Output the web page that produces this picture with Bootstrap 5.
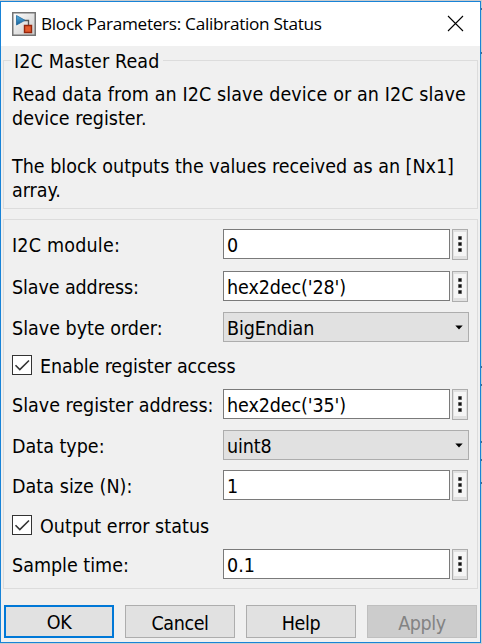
<!DOCTYPE html>
<html lang="en">
<head>
<meta charset="utf-8">
<title>Block Parameters: Calibration Status</title>
<link href="https://cdn.jsdelivr.net/npm/bootstrap@5.3.0/dist/css/bootstrap.min.css" rel="stylesheet">
<style>
body{width:482px;height:644px;background:#c9ccce;font-family:"DejaVu Sans Condensed","DejaVu Sans",sans-serif;font-stretch:condensed;font-size:19.5px;line-height:33px;color:#000;overflow:hidden;padding-top:1px;position:relative}
.dialog{width:481px;height:642px;background:#f0f0f0;border:1px solid #1883d7}
.titlebar{height:44px;padding:0 16px 0 11px}
.title-label{font:17.2px/44px "Open Sans",sans-serif;letter-spacing:-.3px;margin-left:5px}
.close-mark{margin-top:-2px}
.group{border:1px solid #dcdcdc;margin:0 2px}
.info{height:149px;margin-top:14px;padding:0 8px}
.legend-label{background:#f0f0f0;width:max-content;height:24px;line-height:24px;padding:1px 4px 0 3px;margin:-12px 0 0 -1px;letter-spacing:.12px}
.desc{line-height:24px;margin:10px 0 0;white-space:nowrap}
.params{display:grid;grid-template-rows:42px 41px 38px 39px 41px 40px 40px 39px 31px;height:370px;margin-top:10px;padding:9px 7px 0 8px}
.param{display:grid;grid-template-columns:211px 227px 16px;column-gap:0;white-space:nowrap}
.param>.more{margin-left:2px}
.field{height:30px;border:1px solid #7a7a7a;background:#fff;padding:0 3px;line-height:31px;overflow:hidden}
.pick{grid-column:2/4;width:246px;border-color:#adadad;background:#e1e1e1;padding-right:5px}
.pick>span{padding-top:2px}
.more{width:16px;height:31px;border:1px solid #adadad;background:#e1e1e1;padding:2px 1px 3px}
.more svg{display:block}
.check{height:20px;margin-top:5px;line-height:23px;white-space:nowrap}
.box{width:20px;height:20px;border:1px solid #333;background:#fff;margin-right:8px}
.box svg{display:block}
.cmd{width:110px;height:33px;border:1px solid #adadad;background:#e1e1e1;border-radius:0;padding:2px 0 0;font-size:19.5px;line-height:31px;color:#000;letter-spacing:-.4px}
.cmd.ok{border:2px solid #0078d7;line-height:30px;padding-top:1px}
.cmd.off{background:#ccc;border-color:#bfbfbf;color:#838383}
.actions{margin:16px 2px 0 3px;width:473px}
.t1{letter-spacing:.11px}.t2{letter-spacing:.2px}.t3{letter-spacing:-.1px}.t4{letter-spacing:.05px}
.behind{position:absolute;right:0;top:0}
</style>
<script src="https://cdn.jsdelivr.net/npm/bootstrap@5.3.0/dist/js/bootstrap.bundle.min.js"></script>
</head>
<body>
<svg class="d-none" aria-hidden="true">
<symbol id="dots" viewBox="0 0 12 24"><path fill="#f5f5f5" d="M0 0h12v24H0z"/><path fill="#999" d="M4 4h4v4H4zm0 6h4v4H4zm0 6h4v4H4z"/><path fill="#111" d="M4.6 4.6h2.8v2.8H4.600zm0 6h2.8v2.8H4.600zm0 6h2.8v2.8H4.600z"/></symbol>
<symbol id="tick" viewBox="0 0 18 18"><path d="M2.500 9.200 6.800 13.500 16 4.500" fill="none" stroke="#333" stroke-width="1.600"/></symbol>
<symbol id="arrow" viewBox="0 0 8 5"><path d="M.3.5h7.400L4 4.500z"/></symbol>
</svg>
<main class="dialog">
<header class="titlebar bg-white d-flex align-items-center">
<svg width="24" height="24" viewBox="0 0 24 24">
<defs><linearGradient id="tile" x2="1" y2="1"><stop stop-color="#fff"/><stop offset="1" stop-color="#c8c8c8"/></linearGradient>
<linearGradient id="tri" x2="0" y2="1"><stop stop-color="#5bb5e5"/><stop offset="1" stop-color="#145d96"/></linearGradient></defs>
<path d="M.75.75h22.500v22.500H.75z" fill="url(#tile)" stroke="#747474" stroke-width="1.500"/>
<path d="M12 8.500h4.500V13" fill="none" stroke="#555" stroke-width="1.300"/>
<path d="M4.500 3.500v9.500L13 8.300z" fill="url(#tri)" stroke="#25699c" stroke-width=".8"/>
<path d="M12.500 13.500h7v7h-7z" fill="#e45b2d" stroke="#96260d" stroke-width="1.400"/>
</svg>
<span class="title-label">Block Parameters: Calibration Status</span>
<svg class="close-mark ms-auto" width="17" height="17" viewBox="0 0 17 17"><path d="M1 1 16 16M16 1 1 16" stroke="#000" stroke-width="1.100"/></svg>
</header>
<section class="group info">
<div class="legend-label">I2C Master Read</div>
<p class="desc"><span class="t1">Read data from an I2C slave device or an I2C slave</span><br>device register.<br><br>The block outputs the values received as an [Nx1]<br>array.</p>
</section>
<section class="group params">
<div class="param"><span class="t2">I2C module:</span><div class="field">0</div><div class="more"><svg width="12" height="24"><use href="#dots"/></svg></div></div>
<div class="param"><span class="t3">Slave address:</span><div class="field t3">hex2dec('28')</div><div class="more"><svg width="12" height="24"><use href="#dots"/></svg></div></div>
<div class="param"><span>Slave byte order:</span><div class="field pick d-flex justify-content-between align-items-center"><span class="t3">BigEndian</span><svg width="8" height="5"><use href="#arrow"/></svg></div></div>
<div class="check d-flex"><span class="box"><svg width="18" height="18"><use href="#tick"/></svg></span><span class="t3">Enable register access</span></div>
<div class="param"><span>Slave register address:</span><div class="field t3">hex2dec('35')</div><div class="more"><svg width="12" height="24"><use href="#dots"/></svg></div></div>
<div class="param"><span>Data type:</span><div class="field pick d-flex justify-content-between align-items-center"><span class="t3">uint8</span><svg width="8" height="5"><use href="#arrow"/></svg></div></div>
<div class="param"><span class="t4">Data size (N):</span><div class="field">1</div><div class="more"><svg width="12" height="24"><use href="#dots"/></svg></div></div>
<div class="check d-flex"><span class="box"><svg width="18" height="18"><use href="#tick"/></svg></span><span class="t4">Output error status</span></div>
<div class="param"><span>Sample time:</span><div class="field">0.1</div><div class="more"><svg width="12" height="24"><use href="#dots"/></svg></div></div>
</section>
<footer class="actions d-flex justify-content-between">
<button class="btn cmd ok">OK</button><button class="btn cmd">Cancel</button><button class="btn cmd">Help</button><button class="btn cmd off">Apply</button>
</footer>
</main>
<svg class="behind" width="1" height="644"><path d="M0 9h1M0 53h1M0 367h1M0 385h1M0 442h1M0 460h1M0 483h1" stroke="#234a6b" stroke-width="1.500"/></svg>
</body>
</html>
